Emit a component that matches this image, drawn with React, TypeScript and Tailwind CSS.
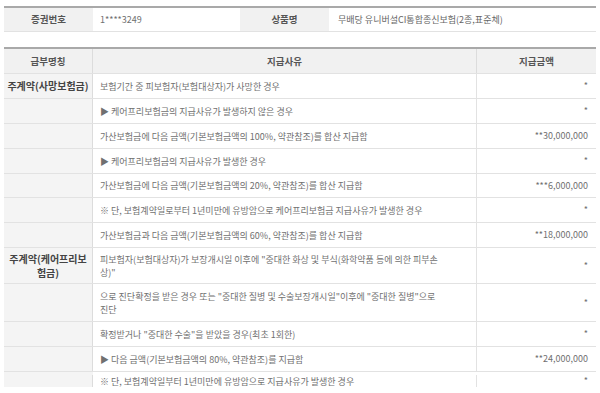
const rows: { name?: string[]; reason: string[]; amount: string; h: string }[] = [
  { name: ['주계약(사망보험금)'], reason: ['보험기간 중 피보험자(보험대상자)가 사망한 경우'], amount: '*', h: 'h-[25px]' },
  { reason: ['▶ 케어프리보험금의 지급사유가 발생하지 않은 경우'], amount: '*', h: 'h-[25px]' },
  { reason: ['가산보험금에 다음 금액(기본보험금액의 100%, 약관참조)를 합산 지급함'], amount: '**30,000,000', h: 'h-[25px]' },
  { reason: ['▶ 케어프리보험금의 지급사유가 발생한 경우'], amount: '*', h: 'h-[25px]' },
  { reason: ['가산보험금에 다음 금액(기본보험금액의 20%, 약관참조)를 합산 지급함'], amount: '***6,000,000', h: 'h-[24px]' },
  { reason: ['※ 단, 보험계약일로부터 1년미만에 유방암으로 케어프리보험금 지급사유가 발생한 경우'], amount: '*', h: 'h-[25px]' },
  { reason: ['가산보험금과 다음 금액(기본보험금액의 60%, 약관참조)를 합산 지급함'], amount: '**18,000,000', h: 'h-[25px]' },
  {
    name: ['주계약(케어프리보', '험금)'],
    reason: ['피보험자(보험대상자)가 보장개시일 이후에 "중대한 화상 및 부식(화학약품 등에 의한 피부손', '상)"'],
    amount: '*',
    h: 'h-[36px]',
  },
  {
    reason: ['으로 진단확정을 받은 경우 또는 "중대한 질병 및 수술보장개시일"이후에 "중대한 질병"으로', '진단'],
    amount: '*',
    h: 'h-[38px]',
  },
  { reason: ['확정받거나 "중대한 수술"을 받았을 경우(최초 1회한)'], amount: '*', h: 'h-[25px]' },
  { reason: ['▶ 다음 금액(기본보험금액의 80%, 약관참조)를 지급함'], amount: '**24,000,000', h: 'h-[25px]' },
  // 마지막 줄은 화면 아래에서 잘려 있음
  { reason: ['※ 단, 보험계약일부터 1년미만에 유방암으로 지급사유가 발생한 경우'], amount: '*', h: 'h-[16px] pt-[3px]' },
];

const font = "font-['Noto_Sans_CJK_KR','Noto_Sans',sans-serif]";

export default function App() {
  return (
    <div className={`w-[600px] h-[393px] bg-white px-[4px] pt-[6px] text-[9px] text-[#707070] ${font}`}>
      {/* 증권 정보 */}
      <div className="flex h-[26px] border-t-2 border-[#a9a9a9] border-b border-b-[#e2e2e2]">
        <div className="w-[89px] bg-[#f1f1f1] flex items-center justify-center font-bold text-[#555] text-[9.5px]">증권번호</div>
        <div className="w-[147px] flex items-center pl-[7px]">1****3249</div>
        <div className="w-[89px] bg-[#f1f1f1] flex items-center justify-center font-bold text-[#555] text-[9.5px]">상품명</div>
        <div className="flex-1 flex items-center pl-[9px] text-[#666]">무배당 유니버설CI통합종신보험(2종,표준체)</div>
      </div>

      {/* 급부 테이블 */}
      <div className="mt-[15px]">
        <div className="flex h-[26px] border-t-2 border-[#a9a9a9] bg-[#f1f1f1] font-bold text-[#555] text-[9.5px]">
          <div className="w-[89px] flex items-center justify-center border-r border-[#dcdcdc]">급부명칭</div>
          <div className="w-[384px] flex items-center justify-center border-r border-[#dcdcdc]">지급사유</div>
          <div className="flex-1 flex items-center justify-center">지급금액</div>
        </div>
        {rows.map((r, i) => (
          <div key={i} className={`flex ${r.h} border-t border-[#e2e2e2] bg-[linear-gradient(to_right,#f4f4f4_89px,transparent_89px)]`}>
            <div className="w-[89px] flex flex-col items-center justify-center text-center font-bold text-[#444] text-[10px] leading-[14px] border-r border-[#dcdcdc]">
              {r.name?.map((n, j) => (
                <div key={j} className="whitespace-nowrap">{n}</div>
              ))}
            </div>
            <div className="w-[384px] flex flex-col justify-center pl-[7px] leading-[13px] border-r border-[#e2e2e2]">
              {r.reason.map((t, j) => (
                <div key={j} className="whitespace-nowrap">{t}</div>
              ))}
            </div>
            <div className="flex-1 flex items-center justify-end pr-[8px]">{r.amount}</div>
          </div>
        ))}
      </div>
    </div>
  );
}
